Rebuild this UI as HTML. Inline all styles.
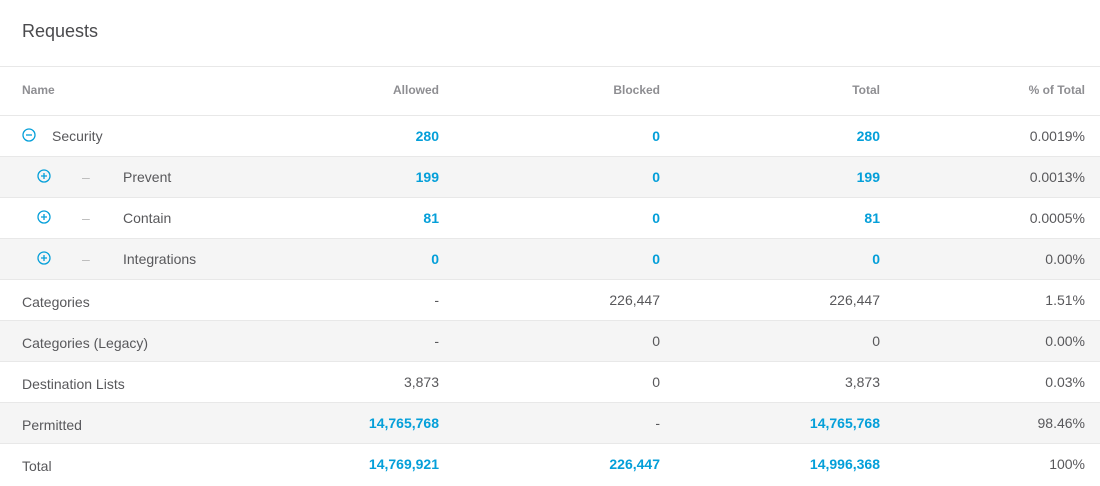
<!DOCTYPE html>
<html><head><style>
body{margin:0;width:1100px;height:483px;background:#fff;font-family:"Liberation Sans",sans-serif;color:#58585b;overflow:hidden}
.title{position:absolute;left:22px;top:21px;font-size:18px;color:#4a4a4d}
.hr{position:absolute;left:0;width:1100px;height:1px;background:#e8e8e8}
.row{position:absolute;left:0;width:1100px;height:40px;font-size:14px}
.row div{position:absolute;top:0;line-height:40px;white-space:nowrap}
.g{background:#f5f5f5}
.c1{right:661px}.c2{right:440px}.c3{right:220px}.c4{right:15px}
.b{color:#049fd9;font-weight:bold}
.h{font-size:12px;font-weight:bold;color:#8e8e92}
svg{position:absolute}
</style></head><body>
<div class="title">Requests</div>
<div class="hr" style="top:66px"></div>
<div class="row h" style="top:70px"><div style="left:22px">Name</div><div class="c1">Allowed</div><div class="c2">Blocked</div><div class="c3">Total</div><div class="c4">% of Total</div></div>
<div class="hr" style="top:115px"></div>
<div class="row" style="top:116px"><svg style="left:22px;top:12px" width="14" height="14"><circle cx="7" cy="7" r="6" fill="none" stroke="#049fd9" stroke-width="1.3"/><path d="M4 7h6" stroke="#049fd9" stroke-width="1.3"/></svg><div style="left:52px">Security</div><div class="c1 b">280</div><div class="c2 b">0</div><div class="c3 b">280</div><div class="c4">0.0019%</div></div>
<div class="hr" style="top:156px"></div>
<div class="row g" style="top:157px"><svg style="left:37px;top:12px" width="14" height="14"><circle cx="7" cy="7" r="6" fill="none" stroke="#049fd9" stroke-width="1.3"/><path d="M4 7h6M7 4v6" stroke="#049fd9" stroke-width="1.3"/></svg><div style="left:82px;color:#bbb">–</div><div style="left:123px">Prevent</div><div class="c1 b">199</div><div class="c2 b">0</div><div class="c3 b">199</div><div class="c4">0.0013%</div></div>
<div class="hr" style="top:197px"></div>
<div class="row" style="top:198px"><svg style="left:37px;top:12px" width="14" height="14"><circle cx="7" cy="7" r="6" fill="none" stroke="#049fd9" stroke-width="1.3"/><path d="M4 7h6M7 4v6" stroke="#049fd9" stroke-width="1.3"/></svg><div style="left:82px;color:#bbb">–</div><div style="left:123px">Contain</div><div class="c1 b">81</div><div class="c2 b">0</div><div class="c3 b">81</div><div class="c4">0.0005%</div></div>
<div class="hr" style="top:238px"></div>
<div class="row g" style="top:239px"><svg style="left:37px;top:12px" width="14" height="14"><circle cx="7" cy="7" r="6" fill="none" stroke="#049fd9" stroke-width="1.3"/><path d="M4 7h6M7 4v6" stroke="#049fd9" stroke-width="1.3"/></svg><div style="left:82px;color:#bbb">–</div><div style="left:123px">Integrations</div><div class="c1 b">0</div><div class="c2 b">0</div><div class="c3 b">0</div><div class="c4">0.00%</div></div>
<div class="hr" style="top:279px"></div>
<div class="row" style="top:280px"><div style="left:22px;top:2px">Categories</div><div class="c1">-</div><div class="c2">226,447</div><div class="c3">226,447</div><div class="c4">1.51%</div></div>
<div class="hr" style="top:320px"></div>
<div class="row g" style="top:321px"><div style="left:22px;top:2px">Categories (Legacy)</div><div class="c1">-</div><div class="c2">0</div><div class="c3">0</div><div class="c4">0.00%</div></div>
<div class="hr" style="top:361px"></div>
<div class="row" style="top:362px"><div style="left:22px;top:2px">Destination Lists</div><div class="c1">3,873</div><div class="c2">0</div><div class="c3">3,873</div><div class="c4">0.03%</div></div>
<div class="hr" style="top:402px"></div>
<div class="row g" style="top:403px"><div style="left:22px;top:2px">Permitted</div><div class="c1 b">14,765,768</div><div class="c2">-</div><div class="c3 b">14,765,768</div><div class="c4">98.46%</div></div>
<div class="hr" style="top:443px"></div>
<div class="row" style="top:444px"><div style="left:22px;top:2px">Total</div><div class="c1 b">14,769,921</div><div class="c2 b">226,447</div><div class="c3 b">14,996,368</div><div class="c4">100%</div></div>
</body></html>
